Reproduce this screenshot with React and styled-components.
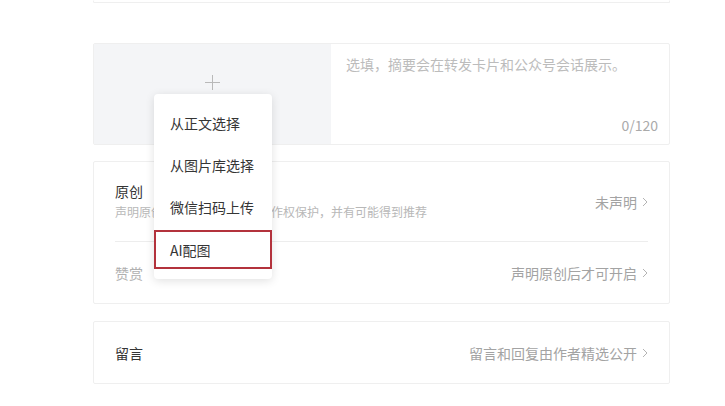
import React from "react";
import styled, { createGlobalStyle } from "styled-components";

const GlobalStyle = createGlobalStyle`
  body {
    margin: 0;
    background: #fff;
    font-family: "Noto Sans CJK SC", "Noto Sans", sans-serif;
    color: #353535;
  }
`;

const Page = styled.div`
  width: 577px;
  margin-left: 93px;
  display: flex;
  flex-direction: column;
`;

const Card = styled.div`
  box-sizing: border-box;
  border: 1px solid #efefef;
  border-radius: 2px;
  background: #fff;
  margin-top: ${(p) => p.$gap || 0}px;
`;

const TopEdge = styled(Card)`
  height: 3px;
  border-top: none;
`;

const CoverCard = styled(Card)`
  position: relative;
  display: flex;
  height: 102px;
`;

const CoverPick = styled.div`
  width: 237px;
  background: #f4f5f7;
  display: flex;
  justify-content: center;
  padding-top: 31px;
  box-sizing: border-box;
`;

const Summary = styled.div`
  flex: 1;
  display: flex;
  flex-direction: column;
  justify-content: space-between;
  padding: 10px 11px 9px 15px;
  font-size: 14px;
  color: #bcbcbc;
`;

const Counter = styled.div`
  align-self: flex-end;
  font-size: 14px;
  color: #aaa;
`;

const Menu = styled.div`
  position: absolute;
  left: 60px;
  top: 50px;
  width: 118px;
  padding: 8px 0 9px;
  background: #fff;
  border-radius: 4px;
  box-shadow: 0 2px 10px rgba(0, 0, 0, 0.12);
  z-index: 2;
`;

const MenuItem = styled.div`
  box-sizing: border-box;
  height: ${(p) => (p.$active ? 39 : 42)}px;
  margin: ${(p) => (p.$active ? "2px 0 1px" : "0")};
  display: flex;
  align-items: center;
  padding-left: ${(p) => (p.$active ? 14 : 16)}px;
  font-size: 14px;
  color: #353535;
  border: ${(p) => (p.$active ? "2px solid #b3323c" : "none")};
`;

const Row = styled.div`
  display: flex;
  align-items: center;
  justify-content: space-between;
  height: ${(p) => p.$h}px;
  margin: 0 21px;
  border-bottom: ${(p) => (p.$divider ? "1px solid #ededed" : "none")};
  box-sizing: border-box;
`;

const Label = styled.div`
  display: flex;
  flex-direction: column;
  gap: 4px;
  margin-top: -2px;
`;

const Title = styled.div`
  font-size: 14px;
  line-height: 18px;
  color: ${(p) => (p.$muted ? "#b0b0b0" : "#353535")};
`;

const Hint = styled.div`
  font-size: 12px;
  line-height: 16px;
  color: #b8b8b8;
`;

const Value = styled.div`
  display: flex;
  align-items: center;
  gap: 5px;
  font-size: 14px;
  color: #a3a3a3;
`;

const Plus = () => (
  <svg width="15" height="15" viewBox="0 0 15 15">
    <path d="M7.5 0v15M0 7.5h15" stroke="#b9b9b9" strokeWidth="1" />
  </svg>
);

const Chevron = () => (
  <svg width="6" height="10" viewBox="0 0 6 10">
    <path d="M1 1l4 4-4 4" fill="none" stroke="#b4b4b4" strokeWidth="1" />
  </svg>
);

const menu = ["从正文选择", "从图片库选择", "微信扫码上传", "AI配图"];

export default function App() {
  return (
    <>
      <GlobalStyle />
      <Page>
        <TopEdge />
        <CoverCard $gap={40}>
          <CoverPick>
            <Plus />
          </CoverPick>
          <Summary>
            <div>选填，摘要会在转发卡片和公众号会话展示。</div>
            <Counter>0/120</Counter>
          </Summary>
          <Menu>
            {menu.map((m, i) => (
              <MenuItem key={m} $active={i === menu.length - 1}>
                {m}
              </MenuItem>
            ))}
          </Menu>
        </CoverCard>
        <Card $gap={16}>
          <Row $h={80} $divider>
            <Label>
              <Title>原创</Title>
              <Hint>声明原创的文章会受到平台著作权保护，并有可能得到推荐</Hint>
            </Label>
            <Value>
              未声明 <Chevron />
            </Value>
          </Row>
          <Row $h={61}>
            <Title $muted>赞赏</Title>
            <Value>
              声明原创后才可开启 <Chevron />
            </Value>
          </Row>
        </Card>
        <Card $gap={17}>
          <Row $h={61}>
            <Title>留言</Title>
            <Value>
              留言和回复由作者精选公开 <Chevron />
            </Value>
          </Row>
        </Card>
      </Page>
    </>
  );
}
